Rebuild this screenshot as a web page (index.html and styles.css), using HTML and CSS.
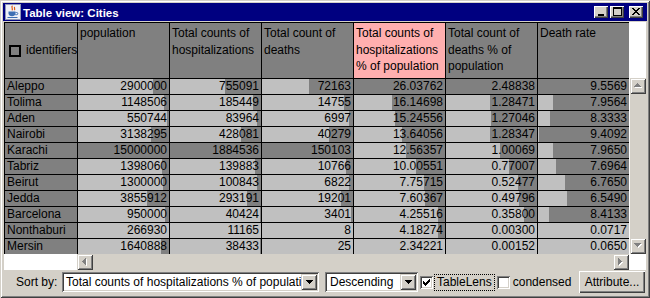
FILE: index.html
```html
<!DOCTYPE html>
<html>
<head>
<meta charset="utf-8">
<link rel="stylesheet" href="styles.css">
</head>
<body>
<div class="win">
  <div class="title">
    <svg class="ticon" width="16" height="16" viewBox="0 0 16 16">
      <rect x="0.5" y="0.5" width="15" height="15" fill="#EEF0F8" stroke="#8E96B8"/>
      <path d="M7.5 1.8c-2 1.6 1.2 2.6-0.6 4.6M9.8 3c-1.3 1 0.9 1.8-0.5 3.2" stroke="#E05A10" stroke-width="1.2" fill="none"/>
      <path d="M3.5 7.5h7v1.8c0 2-1.6 3-3.5 3s-3.5-1-3.5-3z" fill="#3D6EB4"/>
      <path d="M10.5 8.5h1.2a1.1 1.1 0 0 1 0 2.2h-1.5" stroke="#3D6EB4" fill="none"/>
      <path d="M2.5 13.5h10" stroke="#3D6EB4"/>
    </svg>
    <span class="ttext">Table view: Cities</span>
    <div class="tbtns">
      <div class="tb"><svg width="14" height="12" viewBox="0 0 14 12" shape-rendering="crispEdges"><rect x="4" y="8" width="6" height="2" fill="#000"/></svg></div>
      <div class="tb"><svg width="14" height="12" viewBox="0 0 14 12" shape-rendering="crispEdges"><path d="M3 1h9v9H3z M4 3v6h7V3z" fill="#000" fill-rule="evenodd"/></svg></div>
      <div class="tb tbclose"><svg width="14" height="12" viewBox="0 0 14 12" shape-rendering="crispEdges"><g transform="translate(3 2)" fill="#000"><path d="M0 0h2v1H0z M6 0h2v1H6z M1 1h2v1H1z M5 1h2v1H5z M2 2h4v1H2z M3 3h2v1H3z M2 4h4v1H2z M1 5h2v1H1z M5 5h2v1H5z M0 6h2v1H0z M6 6h2v1H6z"/></g></svg></div>
    </div>
  </div>
  <div class="content">
    <div class="pane">
      <div class="table">
        <div class="hc hid"><span class="hbox"></span><span>identifiers</span></div>
        <div class="hc">population</div>
        <div class="hc">Total counts of hospitalizations</div>
        <div class="hc">Total count of deaths</div>
        <div class="hc sorted">Total counts of hospitalizations % of population</div>
        <div class="hc">Total count of deaths % of population</div>
        <div class="hc">Death rate</div>

        <div class="nm">Aleppo</div>
        <div class="v" style="--w:17.87%">2900000</div>
        <div class="v" style="--w:39.71%">755091</div>
        <div class="v" style="--w:48.07%">72163</div>
        <div class="v" style="--w:100%">26.03762</div>
        <div class="v" style="--w:100%">2.48838</div>
        <div class="v" style="--w:100%">9.5569</div>

        <div class="nm">Tolima</div>
        <div class="v" style="--w:5.98%">1148506</div>
        <div class="v" style="--w:9.30%">185449</div>
        <div class="v" style="--w:9.83%">14755</div>
        <div class="v" style="--w:58.26%">16.14698</div>
        <div class="v" style="--w:51.60%">1.28471</div>
        <div class="v" style="--w:83.14%">7.9564</div>

        <div class="nm">Aden</div>
        <div class="v" style="--w:1.93%">550744</div>
        <div class="v" style="--w:3.89%">83964</div>
        <div class="v" style="--w:4.66%">6997</div>
        <div class="v" style="--w:54.46%">15.24556</div>
        <div class="v" style="--w:51.03%">1.27046</div>
        <div class="v" style="--w:87.11%">8.3333</div>

        <div class="nm">Nairobi</div>
        <div class="v" style="--w:19.49%">3138295</div>
        <div class="v" style="--w:22.25%">428081</div>
        <div class="v" style="--w:26.83%">40279</div>
        <div class="v" style="--w:47.68%">13.64056</div>
        <div class="v" style="--w:51.55%">1.28347</div>
        <div class="v" style="--w:98.44%">9.4092</div>

        <div class="nm">Karachi</div>
        <div class="v" style="--w:100%">15000000</div>
        <div class="v" style="--w:100%">1884536</div>
        <div class="v" style="--w:100%">150103</div>
        <div class="v" style="--w:43.14%">12.56357</div>
        <div class="v" style="--w:40.18%">1.00069</div>
        <div class="v" style="--w:83.23%">7.9650</div>

        <div class="nm">Tabriz</div>
        <div class="v" style="--w:7.68%">1398060</div>
        <div class="v" style="--w:6.87%">139883</div>
        <div class="v" style="--w:7.17%">10766</div>
        <div class="v" style="--w:32.34%">10.00551</div>
        <div class="v" style="--w:30.90%">0.77007</div>
        <div class="v" style="--w:80.40%">7.6964</div>

        <div class="nm">Beirut</div>
        <div class="v" style="--w:7.01%">1300000</div>
        <div class="v" style="--w:4.79%">100843</div>
        <div class="v" style="--w:4.54%">6822</div>
        <div class="v" style="--w:22.85%">7.75715</div>
        <div class="v" style="--w:21.04%">0.52477</div>
        <div class="v" style="--w:70.59%">6.7650</div>

        <div class="nm">Jedda</div>
        <div class="v" style="--w:24.36%">3855912</div>
        <div class="v" style="--w:15.05%">293191</div>
        <div class="v" style="--w:12.79%">19201</div>
        <div class="v" style="--w:22.20%">7.60367</div>
        <div class="v" style="--w:19.96%">0.49796</div>
        <div class="v" style="--w:68.31%">6.5490</div>

        <div class="nm">Barcelona</div>
        <div class="v" style="--w:4.64%">950000</div>
        <div class="v" style="--w:1.56%">40424</div>
        <div class="v" style="--w:2.26%">3401</div>
        <div class="v" style="--w:8.07%">4.25516</div>
        <div class="v" style="--w:14.33%">0.35800</div>
        <div class="v" style="--w:87.95%">8.4133</div>

        <div class="nm">Nonthaburi</div>
        <div class="v" style="--w:0%">266930</div>
        <div class="v" style="--w:0%">11165</div>
        <div class="v" style="--w:0%">8</div>
        <div class="v" style="--w:7.77%">4.18274</div>
        <div class="v" style="--w:0.06%">0.00300</div>
        <div class="v" style="--w:0.07%">0.0717</div>

        <div class="nm">Mersin</div>
        <div class="v" style="--w:9.33%">1640888</div>
        <div class="v" style="--w:1.46%">38433</div>
        <div class="v" style="--w:0.01%">25</div>
        <div class="v" style="--w:0%">2.34221</div>
        <div class="v" style="--w:0%">0.00152</div>
        <div class="v" style="--w:0%">0.0650</div>
      </div>
      <div class="vcol">
        <div class="vcorner"></div>
        <div class="vsb">
          <div class="abtn"><svg width="9" height="6" viewBox="0 0 9 6" shape-rendering="crispEdges"><path d="M4 1h1v1h1v1h1v1h1v1H1V4h1V3h1V2h1z" fill="#fff"/><path d="M3 0h1v1h1v1h1v1h1v1H0V3h1V2h1V1h1z" fill="#808080"/></svg></div>
          <div class="abtn"><svg width="9" height="6" viewBox="0 0 9 6" shape-rendering="crispEdges"><path d="M1 1h7v1H7v1H6v1H5v1H4V4H3V3H2V2H1z" fill="#fff"/><path d="M0 0h7v1H6v1H5v1H4v1H3V3H2V2H1V1H0z" fill="#808080"/></svg></div>
        </div>
      </div>
      <div class="hrow">
        <div class="hblank"></div>
        <div class="hsb">
          <div class="abtn"><svg width="6" height="9" viewBox="0 0 6 9" shape-rendering="crispEdges"><path d="M4 1h1v7H4V7H3V6H2V5H1V4h1V3h1V2h1z" fill="#fff"/><path d="M3 0h1v7H3V6H2V5H1V4H0V3h1V2h1V1h1z" fill="#808080"/></svg></div>
          <div class="abtn"><svg width="6" height="9" viewBox="0 0 6 9" shape-rendering="crispEdges"><path d="M1 1h1v1h1v1h1v1h1v1H4v1H3v1H2v1H1z" fill="#fff"/><path d="M0 0h1v1h1v1h1v1h1v1H3v1H2v1H1v1H0z" fill="#808080"/></svg></div>
        </div>
      </div>
      <div class="hcorner"></div>
    </div>
    <div class="ctrl">
      <span class="lbl">Sort by:</span>
      <div class="combo c1">
        <span class="ctext">Total counts of hospitalizations % of population</span>
        <div class="cbtn"><svg width="7" height="4" viewBox="0 0 7 4" shape-rendering="crispEdges"><path d="M0 0h7v1H6v1H5v1H4v1H3V3H2V2H1V1H0z" fill="#000"/></svg></div>
      </div>
      <div class="combo c2">
        <span class="ctext">Descending</span>
        <div class="cbtn"><svg width="7" height="4" viewBox="0 0 7 4" shape-rendering="crispEdges"><path d="M0 0h7v1H6v1H5v1H4v1H3V3H2V2H1V1H0z" fill="#000"/></svg></div>
      </div>
      <div class="chk ck1"><svg width="7" height="7" viewBox="0 0 7 7" shape-rendering="crispEdges"><path d="M6 0h1v1H6z M5 1h2v1H5z M0 2h1v1H0z M4 2h3v1H4z M0 3h2v1H0z M3 3h3v1H3z M0 4h5v1H0z M1 5h3v1H1z M2 6h1v1H2z" fill="#000"/></svg></div>
      <span class="focus">TableLens</span>
      <div class="chk ck2"></div>
      <span class="cond">condensed</span>
      <div class="btn">Attribute...</div>
    </div>
  </div>
</div>
</body>
</html>
```

FILE: styles.css
```css
html, body {
  margin: 0;
  padding: 0;
  background: #D4D0C8;
}

.win {
  width: 650px;
  height: 298px;
  box-sizing: border-box;
  padding: 3px;
  background: #D4D0C8;
  box-shadow: inset 1px 1px #D4D0C8, inset -1px -1px #404040, inset 2px 2px #fff, inset -2px -2px #808080;
  display: flex;
  flex-direction: column;
  font-family: "Liberation Sans", Arial, sans-serif;
  font-size: 12px;
  color: #000;
}

.title {
  height: 18px;
  flex: none;
  background: #000080;
  display: flex;
  align-items: center;
  padding: 0 4px 0 2px;
}

.ticon {
  flex: none;
  display: block;
}

.ttext {
  margin-left: 2px;
  padding-top: 1px;
  color: #fff;
  font-weight: bold;
  font-size: 11.5px;
  line-height: 16px;
  white-space: nowrap;
}

.tbtns {
  margin-left: auto;
  display: flex;
  align-items: center;
}

.tb {
  width: 14px;
  height: 12px;
  background: #D4D0C8;
  box-shadow: inset 1px 1px #fff, inset -1px -1px #404040, inset -2px -2px #808080;
  margin-left: 2px;
}

.tb svg {
  display: block;
}

.tbclose {
  margin-left: 5px;
}

.content {
  flex: 1;
  margin: 1px;
  display: flex;
  flex-direction: column;
}

.pane {
  height: 248px;
  flex: none;
  display: grid;
  grid-template-columns: 625px 17px;
  grid-template-rows: 232px 16px;
  background: #fff;
}

.table {
  display: grid;
  grid-template-columns: 73px repeat(6, 92px);
  grid-template-rows: 56px repeat(11, 16px);
}

.table > div {
  box-sizing: border-box;
  border-left: 1px solid #000;
  border-top: 1px solid #000;
  overflow: hidden;
}

.hc {
  background: #808080;
  padding: 2px 2px 0 2px;
  line-height: 16.5px;
}

.hc.sorted {
  background: #FFAFAF;
}

.hc.hid {
  display: flex;
  align-items: center;
  padding: 0 0 0 4px;
  white-space: nowrap;
}

.hbox {
  flex: none;
  width: 12px;
  height: 12px;
  box-sizing: border-box;
  border: 2px solid #000;
  margin-right: 5px;
}

.nm {
  background: #808080;
  padding-left: 2px;
  line-height: 15px;
  white-space: nowrap;
}

.v {
  text-align: right;
  padding-right: 2px;
  line-height: 15px;
  white-space: nowrap;
  background: linear-gradient(to left, #808080 var(--w), #C0C0C0 var(--w));
}

.vcol {
  display: flex;
  flex-direction: column;
}

.vcorner {
  height: 56px;
  flex: none;
}

.vsb {
  height: 176px;
  width: 16px;
  margin-left: 1px;
  background: #D4D0C8;
  display: flex;
  flex-direction: column;
  justify-content: space-between;
}

.abtn {
  width: 16px;
  height: 16px;
  flex: none;
  background: #D4D0C8;
  box-shadow: inset 1px 1px #D4D0C8, inset -1px -1px #404040, inset 2px 2px #fff, inset -2px -2px #808080;
  display: flex;
  align-items: center;
  justify-content: center;
}

.abtn svg {
  display: block;
}

.hrow {
  display: flex;
}

.hblank {
  width: 73px;
  flex: none;
}

.hsb {
  width: 552px;
  height: 16px;
  background: #D4D0C8;
  display: flex;
  justify-content: space-between;
}

.ctrl {
  flex: 1;
  display: flex;
  align-items: center;
  padding: 0 1px 0 12px;
  white-space: nowrap;
}

.lbl {
  width: 46px;
  flex: none;
}

.combo {
  box-sizing: border-box;
  height: 20px;
  padding: 2px;
  background: #fff;
  box-shadow: inset 1px 1px #808080, inset -1px -1px #fff, inset 2px 2px #404040, inset -2px -2px #D4D0C8;
  display: flex;
  flex: none;
}

.c1 {
  width: 257px;
}

.c2 {
  width: 93px;
  margin-left: 6px;
}

.ctext {
  flex: 1;
  overflow: hidden;
  white-space: nowrap;
  padding-left: 2px;
  line-height: 16px;
}

.c2 .ctext {
  padding-left: 3px;
}

.cbtn {
  width: 16px;
  height: 16px;
  flex: none;
  background: #D4D0C8;
  box-shadow: inset 1px 1px #D4D0C8, inset -1px -1px #404040, inset 2px 2px #fff, inset -2px -2px #808080;
  display: flex;
  align-items: center;
  justify-content: center;
}

.cbtn svg {
  display: block;
}

.chk {
  width: 13px;
  height: 13px;
  flex: none;
  box-sizing: border-box;
  background: #fff;
  box-shadow: inset 1px 1px #808080, inset -1px -1px #fff, inset 2px 2px #404040, inset -2px -2px #D4D0C8;
  display: flex;
  align-items: center;
  justify-content: center;
}

.chk svg {
  display: block;
}

.ck1 {
  margin-left: 2px;
}

.focus {
  margin-left: 1px;
  border: 1px dotted #000;
  padding: 0 2px;
  line-height: 15px;
}

.ck2 {
  margin-left: 2px;
}

.cond {
  margin-left: 3px;
}

.btn {
  margin-left: auto;
  width: 66px;
  height: 22px;
  flex: none;
  box-sizing: border-box;
  background: #D4D0C8;
  box-shadow: inset 1px 1px #fff, inset -1px -1px #404040, inset -2px -2px #808080;
  display: flex;
  align-items: center;
  justify-content: center;
}
```
